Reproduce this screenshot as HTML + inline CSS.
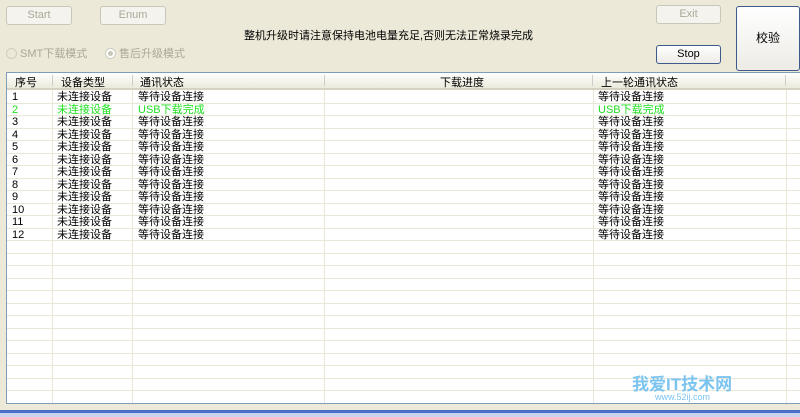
<!DOCTYPE html><html><head><meta charset="utf-8"><style>
body{margin:0;width:800px;height:417px;background:#ECE9D8;font-family:"Liberation Sans","Noto Sans CJK SC",sans-serif;font-size:11px;position:relative;overflow:hidden}
.a{position:absolute}
.btn{position:absolute;border:1px solid #c9c7ba;border-radius:3px;background:#f4f3ee;color:#aca899;text-align:center;font-size:11px;box-sizing:border-box}
.tbl{position:absolute;left:6px;top:72px;width:794px;height:332px;background:#fff;border:1px solid #7f9db9;border-right:none;box-sizing:border-box;overflow:hidden}
.hdr{position:absolute;left:0;top:0;width:100%;height:15px;background:linear-gradient(#fff,#ebeadb);border-bottom:2px solid #d6d2c2}
.row{position:absolute;left:0;width:100%;height:12.5px;border-bottom:1px solid #ebe7d6;box-sizing:border-box;line-height:12px;font-size:11px}
.v{position:absolute;top:17px;bottom:0;width:1px;background:#ebe7d6}
.c{position:absolute;white-space:nowrap}
.g{color:#22e022}
</style></head><body>
<div class="btn" style="left:6px;top:6px;width:66px;height:19px;line-height:17px">Start</div>
<div class="btn" style="left:100px;top:6px;width:66px;height:19px;line-height:17px">Enum</div>
<div class="btn" style="left:656px;top:5px;width:65px;height:19px;line-height:17px">Exit</div>
<div class="btn" style="left:656px;top:45px;width:65px;height:19px;line-height:17px;border-color:#3c5a8a;color:#000;background:linear-gradient(#fff,#ecebe6)">Stop</div>
<div class="btn" style="left:736px;top:6px;width:64px;height:65px;line-height:63px;border-color:#3c5a8a;color:#000;background:linear-gradient(#fff,#ecebe6);font-size:12px">校验</div>
<div class="a" style="left:244px;top:27px;font-size:11px">整机升级时请注意保持电池电量充足,否则无法正常烧录完成</div>
<div class="a" style="left:6px;top:45px;color:#aca899"><span style="display:inline-block;width:9px;height:9px;border:1px solid #cfcdc0;border-radius:50%;vertical-align:-2px"></span> SMT下载模式</div>
<div class="a" style="left:105px;top:45px;color:#aca899"><span style="display:inline-block;width:9px;height:9px;border:1px solid #cfcdc0;border-radius:50%;vertical-align:-2px;background:radial-gradient(#c8c6b8 2px,#fff 3px)"></span> 售后升级模式</div>
<div class="tbl">
<div class="hdr">
<span class="c" style="left:8px;top:1px">序号</span><span class="c" style="left:54px;top:1px">设备类型</span><span class="c" style="left:133px;top:1px">通讯状态</span><span class="c" style="left:433px;top:1px">下载进度</span><span class="c" style="left:594px;top:1px">上一轮通讯状态</span>
<div class="a" style="left:45px;top:2px;width:1px;height:11px;background:#ccc"></div>
<div class="a" style="left:125px;top:2px;width:1px;height:11px;background:#ccc"></div>
<div class="a" style="left:317px;top:2px;width:1px;height:11px;background:#ccc"></div>
<div class="a" style="left:585px;top:2px;width:1px;height:11px;background:#ccc"></div>
<div class="a" style="left:778px;top:2px;width:1px;height:11px;background:#ccc"></div>
</div>
<div class="v" style="left:45px"></div><div class="v" style="left:125px"></div><div class="v" style="left:317px"></div><div class="v" style="left:586px"></div><div class="v" style="left:779px"></div>
<div id="rows"></div>
</div>
<script>
var h='';for(var i=0;i<26;i++){var t=18+i*12.5;var g=i==1?' g':'';h+='<div class="row'+g+'" style="top:'+t+'px">';if(i<12){h+='<span class="c" style="left:5px">'+(i+1)+'</span><span class="c" style="left:50px">未连接设备</span><span class="c" style="left:131px">'+(i==1?'USB下载完成':'等待设备连接')+'</span><span class="c" style="left:591px">'+(i==1?'USB下载完成':'等待设备连接')+'</span>';}h+='</div>';}
document.getElementById('rows').innerHTML=h;
</script>
<div class="a" style="left:0;top:410px;width:800px;height:3px;background:#4a6fc8"></div>
<div class="a" style="left:0;top:413px;width:800px;height:4px;background:#c9d3ef"></div>
<div class="a" style="left:632px;top:370px;font-size:17px;font-weight:bold;color:#7cc4f0">我爱IT技术网</div>
<div class="a" style="left:655px;top:392px;font-size:9px;color:#7cc4f0">www.52ij.com</div>
</body></html>
